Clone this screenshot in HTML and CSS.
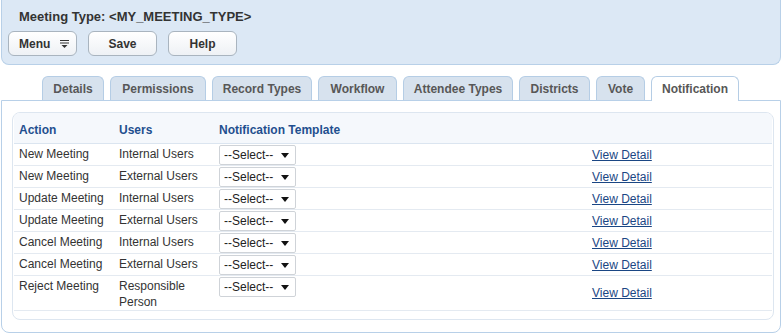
FILE: index.html
```html
<!DOCTYPE html>
<html>
<head>
<meta charset="utf-8">
<link rel="stylesheet" href="styles.css">
</head>
<body>
<div class="header">
  <h1 class="title">Meeting Type: &lt;MY_MEETING_TYPE&gt;</h1>
  <div class="buttons">
    <button class="btn btn-menu">Menu <span class="menu-ico"><svg width="9" height="8" viewBox="0 0 9 8"><path d="M0 0.5H9M0 3H9" stroke="#333" stroke-width="1.2"/><path d="M1.5 5H7.5L4.5 8Z" fill="#333"/></svg></span></button>
    <button class="btn">Save</button>
    <button class="btn">Help</button>
  </div>
</div>
<div class="tabs">
  <div class="tab t-details">Details</div>
  <div class="tab t-perm">Permissions</div>
  <div class="tab t-rec">Record Types</div>
  <div class="tab t-wf">Workflow</div>
  <div class="tab t-att">Attendee Types</div>
  <div class="tab t-dist">Districts</div>
  <div class="tab t-vote">Vote</div>
  <div class="tab t-notif active">Notification</div>
</div>
<div class="panel">
  <div class="inner">
    <table class="grid">
      <thead>
        <tr><th class="c1">Action</th><th class="c2">Users</th><th class="c3">Notification Template</th><th class="c4"></th></tr>
      </thead>
      <tbody>
        <tr><td>New Meeting</td><td>Internal Users</td><td><span class="sel"><select><option>--Select--</option></select></span></td><td class="lnk"><a href="#">View Detail</a></td></tr>
        <tr><td>New Meeting</td><td>External Users</td><td><span class="sel"><select><option>--Select--</option></select></span></td><td class="lnk"><a href="#">View Detail</a></td></tr>
        <tr><td>Update Meeting</td><td>Internal Users</td><td><span class="sel"><select><option>--Select--</option></select></span></td><td class="lnk"><a href="#">View Detail</a></td></tr>
        <tr><td>Update Meeting</td><td>External Users</td><td><span class="sel"><select><option>--Select--</option></select></span></td><td class="lnk"><a href="#">View Detail</a></td></tr>
        <tr><td>Cancel Meeting</td><td>Internal Users</td><td><span class="sel"><select><option>--Select--</option></select></span></td><td class="lnk"><a href="#">View Detail</a></td></tr>
        <tr><td>Cancel Meeting</td><td>External Users</td><td><span class="sel"><select><option>--Select--</option></select></span></td><td class="lnk"><a href="#">View Detail</a></td></tr>
        <tr class="tall"><td>Reject Meeting</td><td>Responsible Person</td><td><span class="sel"><select><option>--Select--</option></select></span></td><td class="lnk"><a href="#">View Detail</a></td></tr>
      </tbody>
    </table>
  </div>
</div>
</body>
</html>
```

FILE: styles.css
```css
* { box-sizing: border-box; }
html, body { margin: 0; padding: 0; background: #fff; }
body {
  font-family: "Liberation Sans", Arial, sans-serif;
  font-size: 12px;
  color: #333;
  width: 781px;
  height: 335px;
  overflow: hidden;
}
.header {
  margin-left: 1px;
  height: 65px;
  background: #dce8f5;
  border: 1px solid #b8d0e8;
  border-top: none;
  border-radius: 0 0 8px 8px;
  padding: 9px 0 0 6px;
}
.title {
  margin: 0 0 0 11px;
  font-size: 13px;
  font-weight: bold;
  color: #333;
  line-height: 16px;
}
.buttons {
  display: flex;
  gap: 11px;
  margin-top: 6px;
}
.btn {
  width: 69px;
  height: 25px;
  border: 1px solid #a9b4bf;
  border-radius: 6px;
  background: linear-gradient(#ffffff, #eef1f5);
  font-family: "Liberation Sans", Arial, sans-serif;
  font-size: 12px;
  font-weight: bold;
  color: #333;
  padding: 0;
  display: flex;
  align-items: center;
  justify-content: center;
}
.btn-menu { justify-content: flex-start; padding-left: 10px; }
.menu-ico { margin-left: 10px; display: inline-flex; }
.tabs {
  display: flex;
  gap: 6px;
  margin: 11px 0 0 42px;
  height: 24px;
  position: relative;
  z-index: 1;
}
.tab {
  height: 24px;
  border: 1px solid #b5cde5;
  border-bottom: none;
  border-radius: 6px 6px 0 0;
  background: #d7e2ee;
  font-weight: bold;
  color: #575757;
  line-height: 25px;
  text-align: center;
  white-space: nowrap;
}
.t-details { width: 62px; }
.t-perm { width: 96px; }
.t-rec { width: 100px; }
.t-wf { width: 79px; }
.t-att { width: 110px; }
.t-dist { width: 71px; }
.t-vote { width: 49px; }
.t-notif { width: 88px; }
.tab.active {
  background: #fff;
  height: 25px;
}
.panel {
  margin-left: 1px;
  height: 233px;
  border: 1px solid #b8d0e8;
  border-radius: 0 0 8px 8px;
  padding: 11px 6px 0 10px;
}
.inner {
  height: 208px;
  border: 1px solid #dde6f0;
  border-radius: 8px;
  overflow: hidden;
  padding: 0 1px;
}
.grid {
  border-collapse: collapse;
  width: 100%;
  table-layout: fixed;
}
.grid th {
  background: #f5f8fc;
  height: 30px;
  text-align: left;
  font-weight: bold;
  color: #1f4f8f;
  padding: 5px 0 0 5px;
  border-bottom: 1px solid #dbe5f0;
}
.c1 { width: 100px; }
.c2 { width: 100px; }
.c3 { width: 373px; }
.grid td {
  height: 22px;
  padding: 2px 5px 0 5px;
  vertical-align: top;
  border-bottom: 1px solid #e4eaf1;
  line-height: 16px;
}
.grid td:nth-child(3) { padding: 1px 0 0 5px; }
.grid td.lnk { vertical-align: middle; padding: 1px 0 0 5px; }
.tall td { height: 33px; }
.sel {
  position: relative;
  display: inline-block;
  width: 77px;
  height: 20px;
}
.sel select {
  appearance: none;
  -webkit-appearance: none;
  width: 77px;
  height: 20px;
  border: 1px solid #cfd3d8;
  border-radius: 2px;
  background: #fff;
  font-family: "Liberation Sans", Arial, sans-serif;
  font-size: 12px;
  color: #222;
  padding: 0 0 0 4px;
  margin: 0;
}
.sel::after {
  content: "";
  position: absolute;
  right: 7px;
  top: 8px;
  border-left: 4px solid transparent;
  border-right: 4px solid transparent;
  border-top: 5px solid #111;
  pointer-events: none;
}
a { color: #1a4684; text-decoration: underline; }
```
